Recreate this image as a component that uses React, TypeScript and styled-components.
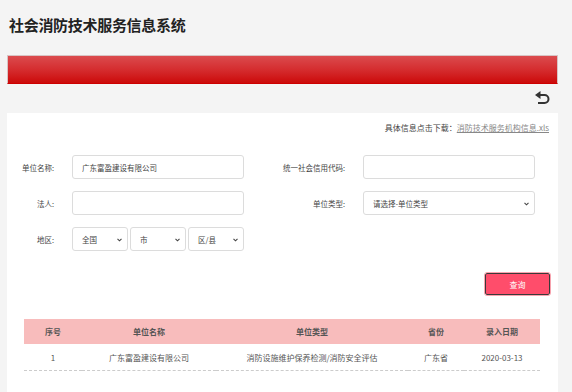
import React from 'react'
import styled, { createGlobalStyle } from 'styled-components'

const GlobalStyle = createGlobalStyle`
  html, body {
    margin: 0;
    padding: 0;
    background: #f4f4f4;
  }
  body {
    font-family: "Noto Sans CJK SC", "Noto Sans", sans-serif;
    color: #333;
  }
`

const Page = styled.div`
  display: flex;
  flex-direction: column;
  min-height: 100vh;
  width: 551px;
  padding-left: 7px;
`

const Header = styled.div`
  height: 55px;
  box-sizing: border-box;
  padding: 15px 0 0 2px;
`

const Title = styled.h1`
  margin: 0;
  font-size: 15px;
  line-height: 20px;
  font-weight: 700;
  color: #222;
  letter-spacing: -0.3px;
`

const RedBar = styled.div`
  height: 29px;
  box-sizing: border-box;
  border: 1px solid #d8c4c4;
  border-bottom-color: #c00;
  background: linear-gradient(180deg, #db4b4e 0%, #d42a2c 55%, #cc0a0a 100%);
`

const Toolbar = styled.div`
  height: 29px;
  display: flex;
  align-items: center;
  justify-content: flex-end;
  padding-right: 8px;
`

const BackButton = styled.button`
  border: 0;
  background: none;
  padding: 0;
  display: flex;
  cursor: pointer;
`

const Panel = styled.div`
  flex: 1;
  background: #fff;
  padding-top: 9px;
`

const DownloadLine = styled.div`
  display: flex;
  justify-content: flex-end;
  padding-right: 9px;
  font-size: 8px;
  line-height: 12px;
  color: #444;
`

const FileLink = styled.a`
  color: #888;
  text-decoration: underline;
`

const Form = styled.div`
  display: grid;
  grid-template-columns: 65px 172px 119px 172px;
  grid-auto-rows: 24px;
  row-gap: 12px;
  margin-top: 21px;
`

const Label = styled.label`
  display: flex;
  align-items: center;
  justify-content: flex-end;
  padding-right: 18px;
  font-size: 7.5px;
  color: #444;
`

const fieldBase = `
  box-sizing: border-box;
  width: 100%;
  height: 24px;
  border: 1px solid #dcdcdc;
  border-radius: 3px;
  background: #fff;
  font-family: "Noto Sans CJK SC", "Noto Sans", sans-serif;
  font-size: 7.5px;
  color: #444;
  outline: none;
`

const TextInput = styled.input`
  ${fieldBase}
  padding: 0 9px;
`

const SelectBox = styled.div`
  position: relative;
  height: 24px;
`

const Select = styled.select`
  ${fieldBase}
  display: block;
  appearance: none;
  -webkit-appearance: none;
  padding: 0 16px 0 9px;
`

const Chevron = styled.svg`
  position: absolute;
  right: 6px;
  top: 50%;
  margin-top: -1px;
  display: block;
  pointer-events: none;
`

const SelectGroup = styled.div`
  display: grid;
  grid-template-columns: repeat(3, 1fr);
  column-gap: 2px;
`

const ButtonRow = styled.div`
  display: flex;
  justify-content: flex-end;
  margin-top: 22px;
  padding-right: 8px;
`

const SearchButton = styled.button`
  width: 65px;
  height: 22px;
  box-sizing: border-box;
  border: 1.5px solid #3a3a3a;
  border-radius: 2px;
  outline: 1px solid #f7a3ae;
  background: #ff4d6b;
  color: #fff;
  font-family: "Noto Sans CJK SC", sans-serif;
  font-size: 8px;
  cursor: pointer;
`

const Table = styled.table`
  width: 516px;
  margin: 24px 0 0 17px;
  border-collapse: collapse;
  table-layout: fixed;
  font-size: 8px;
  color: #555;
`

const HeadCell = styled.th<{ $w: number }>`
  width: ${p => p.$w}px;
  height: 25px;
  padding: 0;
  background: #f8bcbc;
  font-weight: 700;
  color: #555;
  text-align: center;
`

const Cell = styled.td`
  height: 26px;
  padding: 0;
  text-align: center;
  border-bottom: 1px dashed #ccc;
`

const columns = [
  { title: '序号', w: 58 },
  { title: '单位名称', w: 134 },
  { title: '单位类型', w: 192 },
  { title: '省份', w: 56 },
  { title: '录入日期', w: 76 },
]

const rows = [
  ['1', '广东富盈建设有限公司', '消防设施维护保养检测/消防安全评估', '广东省', '2020-03-13'],
]

const BackIcon = () => (
  <svg width="16" height="17" viewBox="0 0 16 17">
    <polygon points="1,5 6.5,1 6.5,9" fill="#333" />
    <path d="M6 5 H10.5 A4 4 0 0 1 10.5 13 H4" fill="none" stroke="#333" strokeWidth="2" />
  </svg>
)

const Dropdown: React.FC<{ options: string[] }> = ({ options }) => (
  <SelectBox>
    <Select>
      {options.map(o => <option key={o}>{o}</option>)}
    </Select>
    <Chevron width="5" height="4" viewBox="0 0 5 4">
      <path d="M0.5 0.8 L2.5 2.8 L4.5 0.8" fill="none" stroke="#444" strokeWidth="1.1" />
    </Chevron>
  </SelectBox>
)

const App: React.FC = () => {
  return (
    <Page>
      <GlobalStyle />
      <Header>
        <Title>社会消防技术服务信息系统</Title>
      </Header>
      <RedBar />
      <Toolbar>
        <BackButton aria-label="返回">
          <BackIcon />
        </BackButton>
      </Toolbar>
      <Panel>
        <DownloadLine>
          具体信息点击下载：<FileLink href="#">消防技术服务机构信息.xls</FileLink>
        </DownloadLine>
        <Form>
          <Label>单位名称:</Label>
          <TextInput defaultValue="广东富盈建设有限公司" />
          <Label>统一社会信用代码:</Label>
          <TextInput />

          <Label>法人:</Label>
          <TextInput />
          <Label>单位类型:</Label>
          <Dropdown options={['请选择-单位类型']} />

          <Label>地区:</Label>
          <SelectGroup>
            <Dropdown options={['全国']} />
            <Dropdown options={['市']} />
            <Dropdown options={['区/县']} />
          </SelectGroup>
        </Form>
        <ButtonRow>
          <SearchButton>查询</SearchButton>
        </ButtonRow>
        <Table>
          <thead>
            <tr>
              {columns.map(c => (
                <HeadCell key={c.title} $w={c.w}>{c.title}</HeadCell>
              ))}
            </tr>
          </thead>
          <tbody>
            {rows.map(r => (
              <tr key={r[0]}>
                {r.map((v, i) => <Cell key={i}>{v}</Cell>)}
              </tr>
            ))}
          </tbody>
        </Table>
      </Panel>
    </Page>
  )
}

export default App
